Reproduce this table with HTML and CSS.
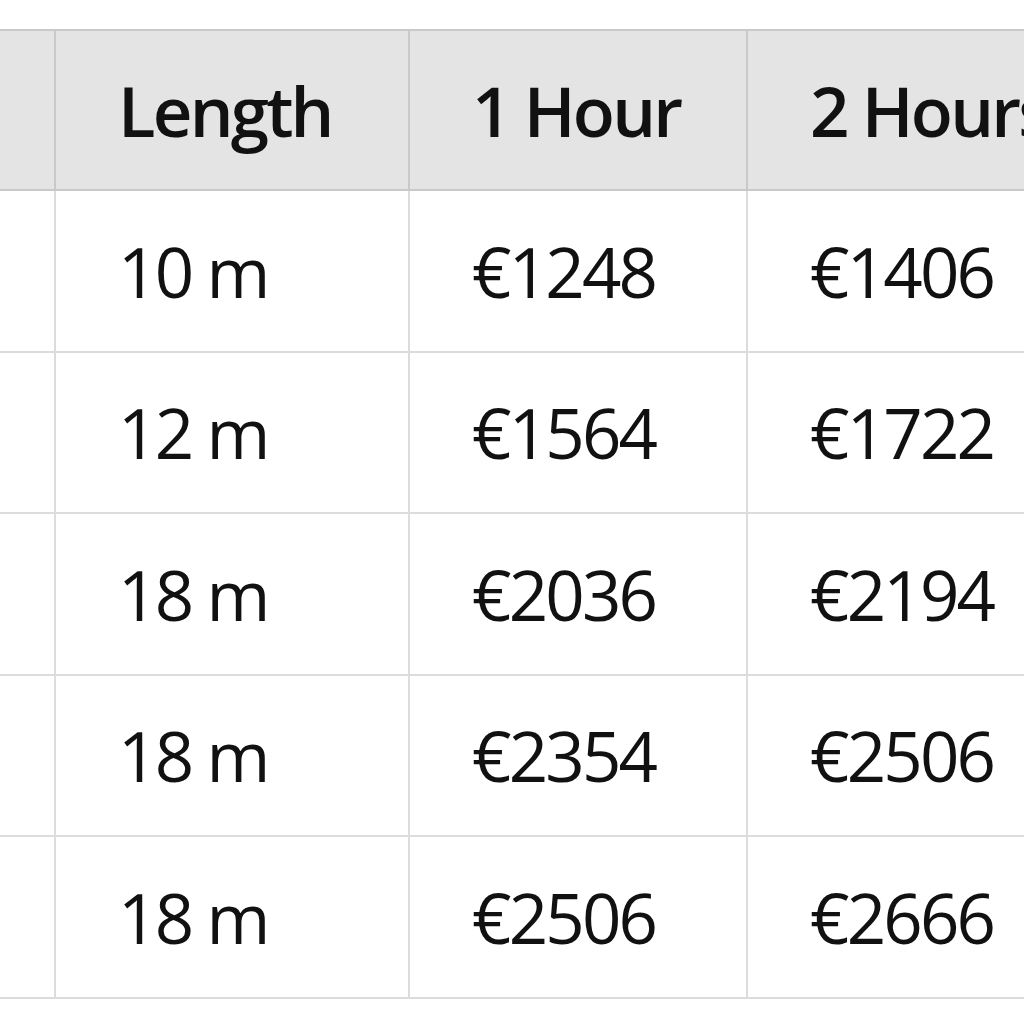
FILE: index.html
```html
<!DOCTYPE html>
<html lang="en">
<head>
<meta charset="utf-8">
<title>Prices</title>
<link rel="stylesheet" href="styles.css">
</head>
<body>
<table class="prices">
  <thead>
    <tr><th class="lead"></th><th>Length</th><th>1 Hour</th><th>2 Hours</th></tr>
  </thead>
  <tbody>
    <tr><td class="lead"></td><td>10 m</td><td>€1248</td><td>€1406</td></tr>
    <tr><td class="lead"></td><td>12 m</td><td>€1564</td><td>€1722</td></tr>
    <tr><td class="lead"></td><td>18 m</td><td>€2036</td><td>€2194</td></tr>
    <tr><td class="lead"></td><td>18 m</td><td>€2354</td><td>€2506</td></tr>
    <tr><td class="lead"></td><td>18 m</td><td>€2506</td><td>€2666</td></tr>
  </tbody>
</table>
</body>
</html>
```
FILE: styles.css
```css
html, body {
  margin: 0;
  padding: 0;
  background: #ffffff;
  overflow: hidden;
  width: 1024px;
  height: 1024px;
}
.prices {
  margin-top: 29px;
  border-collapse: collapse;
  font-family: "Open Sans", "Noto Sans", sans-serif;
  font-size: 69px;
  letter-spacing: -2.8px;
  color: #111111;
  table-layout: fixed;
  width: 1200px;
}
.prices th, .prices td {
  text-align: left;
  padding: 0 0 0 62px;
  height: 159.5px;
  border: 2px solid #dcdcdc;
  white-space: nowrap;
  overflow: hidden;
}
.prices th {
  background: #e4e4e4;
  font-weight: 600;
  border-color: #c9c9c9;
  height: 158px;
}
.prices .lead {
  width: 54px;
  padding: 0;
  border-left: none;
}
.prices th:nth-child(2) { width: 290px; }
.prices th:nth-child(3) { width: 274px; }
```
